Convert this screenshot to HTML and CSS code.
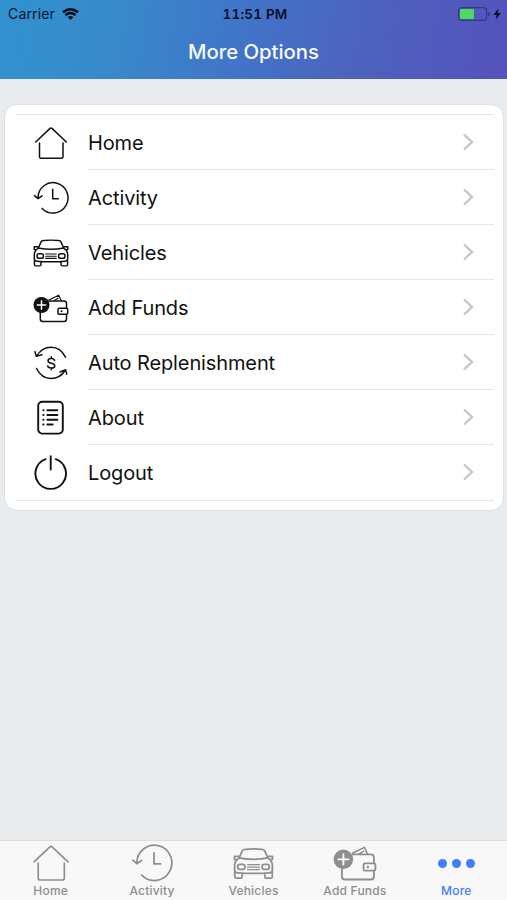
FILE: index.html
```
<!DOCTYPE html>
<html lang="en">
<head>
<meta charset="utf-8">
<title>More Options</title>
<link rel="stylesheet" href="styles.css">
</head>
<body>
<svg class="sprite" aria-hidden="true">
  <symbol id="home" viewBox="0 0 36 36"><path d="M2.700 17 17 3.400Q18 2.500 19 3.400L33.300 17M6.500 18V31.800Q6.500 33.300 8 33.300H28.500Q30 33.300 30 31.800V18"/></symbol>
  <symbol id="activity" viewBox="0 0 36 36"><path d="M5 17.800A15 15.200 0 1 1 9.200 28.400M1.500 15.600 5 18.600 9 15.800M19.700 9.300V18.800H25.300"/></symbol>
  <symbol id="car" viewBox="0 0 36 36"><path d="M6 13.300 8.500 7.700Q9.100 6.300 10.800 6.200Q18 5.400 25.200 6.200Q26.900 6.300 27.500 7.700L30 13.300Q18 15.800 6 13.300ZM6 13.300Q2.300 15.600 2.200 19.500V23.500Q2.200 25.600 4.500 25.800Q18 26.900 31.500 25.800Q33.800 25.600 33.800 23.500V19.500Q33.700 15.600 30 13.300M5.500 12H2.100V14.600L4 14.800M30.500 12H33.900V14.600L32 14.800M2.300 25V29Q2.300 30.200 3.500 30.200H7.300Q8.500 30.200 8.500 29V26.300M33.700 25V29Q33.700 30.200 32.500 30.200H28.700Q27.500 30.200 27.500 29V26.300"/><path class="fine" d="M13 18.900H23M13 21H23M13 23.100H23"/><rect x="4.800" y="18.700" width="6" height="4.300" rx="1.800"/><rect x="25.200" y="18.700" width="6" height="4.300" rx="1.800"/></symbol>
  <symbol id="wallet" viewBox="0 0 36 36"><path d="M16 11H31Q33.500 11 33.500 13.500V18.300M33.500 24.300V29Q33.500 31.500 31 31.500H10Q7.300 31.500 7.300 29V22"/><path class="edge" d="M15.800 10 25.700 5.200 28.200 10.500M21.500 10.600 25 8.300"/><rect x="25" y="18.300" width="9.700" height="6" rx="1.200"/><circle class="dot" cx="28.500" cy="21.300" r="1"/><circle class="dot" cx="8.500" cy="15" r="8"/><path class="plus" d="M4.300 15H12.700M8.500 10.800V19.200"/></symbol>
  <symbol id="refill" viewBox="0 0 36 36"><path d="M4 10.700Q9 2.300 18 2.300Q27.500 2.300 32.500 12.200M3.500 23.500Q8.500 33.500 18 33.500Q27 33.500 32 25.500M2 6.600 3.300 11.400 9 9.700M27 27 32.700 24.800 33.700 29.200"/><path d="M21.500 15.500Q21 13.500 18.300 13.500Q15 13.500 15 15.700Q15 17.600 18.300 18.200Q21.800 18.800 21.800 20.900Q21.800 23 18.300 23Q15 23 14.700 20.900M18.300 11.800V13.500M18.300 23V24.700"/></symbol>
  <symbol id="about" viewBox="0 0 36 36"><rect class="heavy" x="5.200" y="1.800" width="24.600" height="31.800" rx="4"/><path class="heavy" d="M14.300 10.200H24.400M14.300 15H24.400M14.300 19.700H24.400M14.300 24.500H19.700M10.300 10.200H10.600M10.300 15H10.600M10.300 19.700H10.600M10.300 24.500H10.600"/></symbol>
  <symbol id="power" viewBox="0 0 36 36"><path class="heavy" d="M12.600 4.200A15.300 15.300 0 1 0 22.800 4.200M17.700 1.300V14.500"/></symbol>
  <symbol id="next" viewBox="0 0 12 20"><path d="M2 2.500 10 10 2 17.500"/></symbol>
</svg>
<header class="header">
  <div class="status">
    <div class="carrier"><span>Carrier</span>
      <svg class="wifi" viewBox="0 0 17 12"><path d="M1 4.200Q8.500-1.700 16 4.200M3.500 7Q8.500 3 13.500 7"/><path class="tip" d="M5.700 9.100Q8.500 7 11.300 9.100L8.500 12Z"/></svg>
    </div>
    <span class="time">11:51 PM</span>
    <svg class="battery" viewBox="0 0 44 14"><rect class="shell" x=".6" y=".6" width="28" height="12.800" rx="2.800"/><rect class="charge" x="2" y="2" width="14" height="10" rx="1"/><path class="cap" d="M30 4.800Q31.800 5.200 31.800 7Q31.800 8.800 30 9.200Z"/><path d="M40.600 1.200 35.500 7.900H38.700L37.600 12.800 42.900 5.900H39.600Z"/></svg>
  </div>
  <h1 class="title">More Options</h1>
</header>
<main class="content">
  <ul class="menu">
    <li class="row"><svg class="icon"><use href="#home"/></svg><div class="cell"><span>Home</span><svg class="next"><use href="#next"/></svg></div></li>
    <li class="row"><svg class="icon"><use href="#activity"/></svg><div class="cell"><span>Activity</span><svg class="next"><use href="#next"/></svg></div></li>
    <li class="row"><svg class="icon car"><use href="#car"/></svg><div class="cell"><span>Vehicles</span><svg class="next"><use href="#next"/></svg></div></li>
    <li class="row"><svg class="icon"><use href="#wallet"/></svg><div class="cell"><span>Add Funds</span><svg class="next"><use href="#next"/></svg></div></li>
    <li class="row"><svg class="icon"><use href="#refill"/></svg><div class="cell"><span>Auto Replenishment</span><svg class="next"><use href="#next"/></svg></div></li>
    <li class="row"><svg class="icon"><use href="#about"/></svg><div class="cell"><span>About</span><svg class="next"><use href="#next"/></svg></div></li>
    <li class="row"><svg class="icon"><use href="#power"/></svg><div class="cell"><span>Logout</span><svg class="next"><use href="#next"/></svg></div></li>
  </ul>
</main>
<nav class="tabs">
  <div class="tab"><div class="art"><svg class="icon-home"><use href="#home"/></svg></div><span>Home</span></div>
  <div class="tab"><div class="art"><svg class="icon-activity"><use href="#activity"/></svg></div><span>Activity</span></div>
  <div class="tab"><div class="art"><svg class="icon-car"><use href="#car"/></svg></div><span>Vehicles</span></div>
  <div class="tab"><div class="art"><svg class="icon-wallet"><use href="#wallet"/></svg></div><span>Add Funds</span></div>
  <div class="tab active"><div class="art dots"><i></i><i></i><i></i></div><span>More</span></div>
</nav>
</body>
</html>
```
FILE: styles.css
```
* { box-sizing: border-box; }
body {
  margin: 0;
  height: 900px;
  display: flex;
  flex-direction: column;
  overflow: hidden;
  background: #e9ebed;
  color: #111;
  font-family: Inter, "Liberation Sans", sans-serif;
}
svg {
  display: block;
  flex: none;
  fill: none;
  stroke: currentColor;
  stroke-width: 1.5;
  stroke-linecap: round;
  stroke-linejoin: round;
}
.sprite { display: none; }
.dot { fill: currentColor; stroke: none; }
.plus { stroke: #fff; }
.heavy { stroke-width: 1.9; }
.fine { stroke-width: 1; }
.edge { stroke-width: 1.2; }
.header {
  height: 79px;
  flex: none;
  background: linear-gradient(100deg, #3292d0 0%, #378aca 22%, #4174c8 48%, #4d61be 73%, #5453bc 100%);
}
.status {
  height: 27px;
  padding: 0 5px 0 8px;
  display: grid;
  grid-template-columns: 1fr auto 1fr;
  align-items: center;
  color: #07132b;
  font-size: 14px;
}
.carrier { display: flex; align-items: center; gap: 7px; letter-spacing: .15px; }
.wifi { width: 17px; height: 12px; stroke-width: 2.4; stroke-linecap: butt; color: #020812; }
.tip { fill: currentColor; stroke: none; }
.time { font-weight: 600; font-size: 13.5px; letter-spacing: .2px; font-variant-numeric: tabular-nums; color: #080f25; }
.battery { width: 44px; height: 14px; justify-self: end; fill: #080d20; stroke: none; }
.shell { fill: none; stroke: #343b7c; stroke-width: 1.2; }
.charge { fill: #4cd964; }
.cap { fill: #343b7c; }
.title {
  margin: 0;
  height: 50px;
  line-height: 50px;
  text-align: center;
  font-size: 20.3px;
  font-weight: 550;
  color: #f8faff;
}
.content { flex: 1; padding: 25px 3px 0 4px; }
.menu {
  list-style: none;
  margin: 0;
  height: 407px;
  padding: 10px 9px 0 10px;
  background: #fff;
  border: 1px solid #d5e1f2;
  border-radius: 13px;
}
.row { height: 55px; display: flex; align-items: center; padding-left: 18px; }
.row:first-child { box-shadow: 0 -1px #e6e6e8; }
.row:last-child { box-shadow: 0 1px #e6e6e8; }
.icon { width: 36px; height: 36px; margin-right: 19px; }
.icon.car { width: 38px; height: 38px; margin: 0 18px 0 -1px; stroke-width: 1.4; }
.cell {
  flex: 1;
  height: 55px;
  padding-right: 20px;
  display: flex;
  align-items: center;
  justify-content: space-between;
  border-bottom: 1px solid #e6e6e8;
  font-size: 20px;
  letter-spacing: -.12px;
}
.cell span { padding-top: 1px; }
.row:last-child .cell { border-bottom: 0; padding-bottom: 1px; }
.next { width: 12px; height: 20px; color: #c5c5c9; stroke-width: 2.3; stroke-linecap: butt; stroke-linejoin: miter; }
.tabs {
  height: 60px;
  flex: none;
  display: grid;
  grid-template-columns: repeat(5, 1fr);
  background: #f8f8f8;
  border-top: 1px solid #dcdddf;
  color: #8e8e8e;
}
.tab { display: flex; flex-direction: column; align-items: center; font-size: 12px; line-height: 16px; font-weight: 500; letter-spacing: .2px; }
.art { height: 42px; padding-top: 2px; display: flex; align-items: center; }
.tabs .plus { stroke: #f8f8f8; }
.icon-home { width: 40px; height: 40px; margin-left: 1px; }
.icon-activity { width: 42px; height: 42px; }
.icon-car { width: 45px; height: 43px; }
.icon-wallet { width: 44px; height: 44px; margin-left: 1px; }
.active { color: #3f80f6; }
.dots { gap: 5px; }
.dots i { width: 9px; height: 9px; border-radius: 50%; background: currentColor; }
```
